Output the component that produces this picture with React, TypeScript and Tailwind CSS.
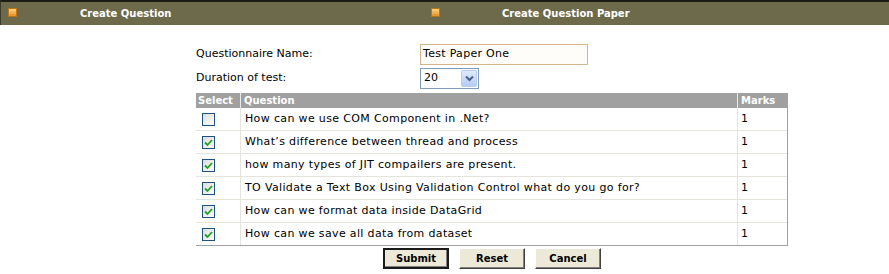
import React from 'react'

const questions = [
  { text: 'How can we use COM Component in .Net?', checked: false },
  { text: 'What’s difference between thread and process', checked: true },
  { text: 'how many types of JIT compailers are present.', checked: true },
  { text: 'TO Validate a Text Box Using Validation Control what do you go for?', checked: true },
  { text: 'How can we format data inside DataGrid', checked: true },
  { text: 'How can we save all data from dataset', checked: true },
]

const Bullet = () => (
  <span className="inline-block w-[9px] h-[9px] bg-gradient-to-b from-[#ffd37a] to-[#e8901c] border border-[#b8741a]" />
)

const Checkbox = ({ checked }: { checked: boolean }) => (
  <span className="inline-flex w-[13px] h-[13px] border border-[#1c5180] bg-gradient-to-br from-[#dcdcd7] to-[#ffffff] items-center justify-center">
    {checked && (
      <svg width="9" height="9" viewBox="0 0 9 9">
        <path d="M1 4.5 L3.5 7 L8 2" stroke="#21a121" strokeWidth="1.8" fill="none" />
      </svg>
    )}
  </span>
)

const Button = ({ label, primary }: { label: string; primary?: boolean }) => (
  <button
    className={
      primary
        ? 'w-[66px] h-[21px] bg-[#ece9d8] border-2 border-[#1a1a1a] text-[10px] font-bold text-black shadow-[inset_-1px_-1px_0_#808080]'
        : 'w-[66px] h-[21px] bg-[#ece9d8] border border-t-[#ffffff] border-l-[#ffffff] border-r-[#404040] border-b-[#404040] text-[10px] font-bold text-black shadow-[inset_-1px_-1px_0_#808080]'
    }
  >
    {label}
  </button>
)

export default function App() {
  return (
    <div className="w-[889px] h-[274px] bg-white text-[11px] text-black" style={{ fontFamily: '"DejaVu Sans", Verdana, sans-serif' }}>
      <div className="h-[25px] bg-[#6c6a4b] border-t-2 border-t-[#1c1c14] border-l border-l-[#3a3a2a] flex items-center text-white font-bold text-[10px]">
        <div className="w-[420px] flex items-center">
          <span className="ml-[7px]"><Bullet /></span>
          <span className="ml-[63px]">Create Question</span>
        </div>
        <div className="flex items-center">
          <span className="ml-[10px]"><Bullet /></span>
          <span className="ml-[62px]">Create Question Paper</span>
        </div>
      </div>

      <div className="ml-[196px] mt-[18px] w-[592px]">
        <div className="flex items-center h-[22px]">
          <span className="w-[224px]">Questionnaire Name:</span>
          <div className="w-[168px] h-[21px] border border-[#d4b48c] bg-[#fffdf9] flex items-center px-[2px] tracking-[0.3px]">Test Paper One</div>
        </div>
        <div className="flex items-center h-[23px] mt-[2px]">
          <span className="w-[224px]">Duration of test:</span>
          <div className="w-[59px] h-[21px] border border-[#7f9db9] bg-white flex items-center justify-between pl-[3px] pr-[1px]">
            <span>20</span>
            <span className="w-[16px] h-[17px] bg-gradient-to-b from-[#e0ebfd] to-[#b5cbf5] border border-[#b9cdf3] rounded-[2px] flex items-center justify-center">
              <svg width="9" height="7" viewBox="0 0 9 7">
                <path d="M1 1.5 L4.5 5 L8 1.5" stroke="#4d6185" strokeWidth="2" fill="none" />
              </svg>
            </span>
          </div>
        </div>

        <div className="mt-[3px] border-r border-b border-[#a0a0a0]">
          <div className="flex h-[15px] bg-[#a0a0a0] text-white font-bold text-[10px] items-center">
            <div className="w-[45px] pl-[2px] border-r border-[#e8e8e8] h-full flex items-center">Select</div>
            <div className="w-[497px] pl-[3px] border-r border-[#e8e8e8] h-full flex items-center">Question</div>
            <div className="flex-1 pl-[3px] h-full flex items-center">Marks</div>
          </div>
          {questions.map((q, i) => (
            <div key={i} className={i < questions.length - 1 ? 'flex h-[23px] border-b border-[#e4e4dc]' : 'flex h-[22px]'}>
              <div className="w-[45px] pl-[6px] border-r border-[#e4e4dc] flex items-center">
                <Checkbox checked={q.checked} />
              </div>
              <div className="w-[497px] pl-[4px] border-r border-[#e4e4dc] flex items-center tracking-[0.35px]">{q.text}</div>
              <div className="flex-1 pl-[3px] flex items-center">1</div>
            </div>
          ))}
        </div>
      </div>

      <div className="flex gap-[10px] ml-[383px] mt-[2px]">
        <Button label="Submit" primary />
        <Button label="Reset" />
        <Button label="Cancel" />
      </div>
    </div>
  )
}
